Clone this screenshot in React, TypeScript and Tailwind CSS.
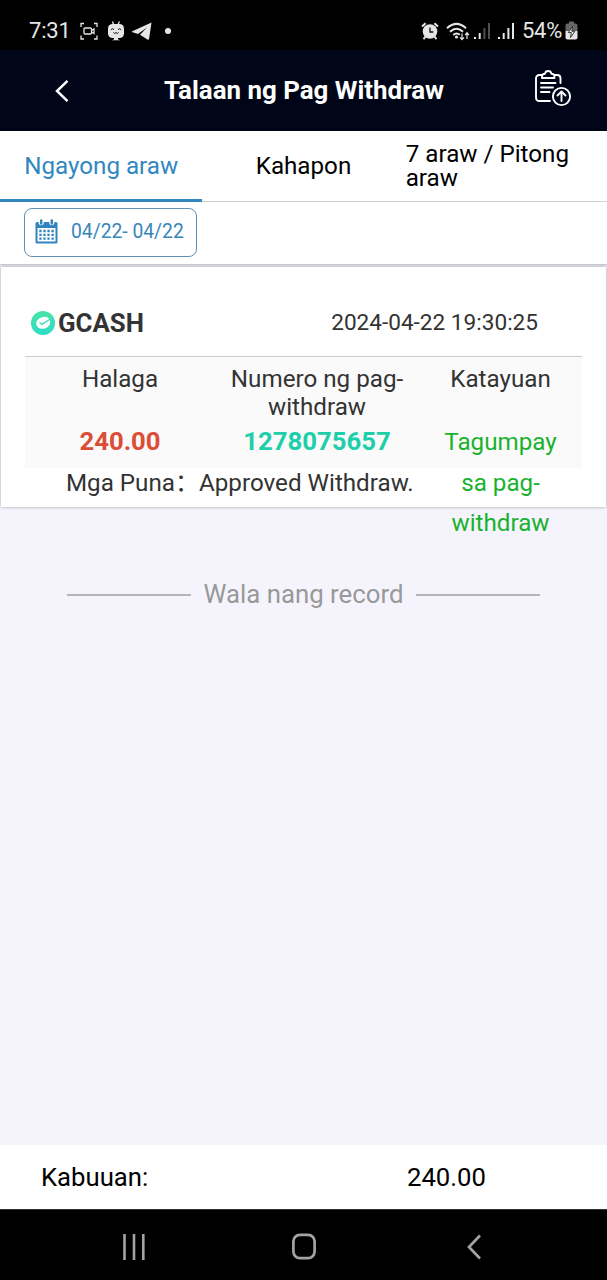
import { clsx } from "clsx";

const tabs = ["Ngayong araw", "Kahapon", "7 araw / Pitong araw"];

const record = {
  method: "GCASH",
  date: "2024-04-22 19:30:25",
  amount: "240.00",
  number: "1278075657",
  status: "Tagumpay sa pag-withdraw",
  remarks: "Approved Withdraw.",
};

function StatusBar() {
  return (
    <div className="flex h-[50px] items-center justify-between bg-black pt-[11px] pr-[29px] pl-[29px] text-[#e6e6e6]">
      <div className="flex items-center">
        <span className="w-[50px] text-[22px] leading-none tracking-[-0.2px]">7:31</span>
        <svg className="h-[20px] w-[20px]" viewBox="0 0 20 20" fill="none" stroke="currentColor" strokeWidth="1.3">
          <path d="M2 6V2.5h3M15 2.5h3V6M18 14.5V18h-3M5 18H2v-3.5" />
          <rect x="5" y="7" width="7.5" height="6" rx="1" />
          <path d="m12.5 9.5 2.5-1.5v4.500L12.5 11" />
        </svg>
        <svg className="ml-[8px] h-[20px] w-[18px]" viewBox="0 0 18 20">
          <path d="M6.5 3.5 5.5.5M11 3.5 12.5.5" stroke="currentColor" strokeWidth="1.3" />
          <rect x="1" y="3" width="16" height="14" rx="4.5" fill="currentColor" />
          <path d="M4.5 19.3q4.5-2.300 9 0zM7 16h4v2.500H7z" fill="currentColor" />
          <path d="M3.800 8.700Q5.500 7 7 8.500M14.200 8.700Q12.500 7 11 8.500M6.500 11.500l1.300 1 1.200-1 1.200 1 1.300-1" stroke="#111" fill="none" strokeWidth="1" />
        </svg>
        <svg className="ml-[7px] h-[20px] w-[20px]" viewBox="0 0 20 20">
          <path d="M19.500 1.500.3 10.300q-.8.600.3 1L6 13l9-6.500-7 7.200 7.400 4.900q1.300.5 1.700-.9z" fill="currentColor" />
        </svg>
        <span className="ml-[13px] h-[6px] w-[6px] rounded-full bg-current" />
      </div>

      <div className="flex items-center">
        <svg className="h-[18px] w-[18px]" viewBox="0 0 18 18" fill="none" stroke="currentColor">
          <circle cx="9" cy="9.500" r="7.300" fill="currentColor" stroke="none" />
          <path d="M1 4.600 4.600 1.200M17 4.600l-3.600-3.400M4.500 14.500 2.500 17.200M13.500 14.500l2 2.700" strokeWidth="2" />
          <path d="M9 5.500v4.500h3.300" stroke="#111" strokeWidth="1.300" />
        </svg>
        <svg className="ml-[7px] h-[20px] w-[24px]" viewBox="0 0 24 20" fill="none" stroke="currentColor" strokeWidth="2">
          <path d="M1 7.200q9.500-8.600 19 0M4 10.800q6.500-6 13 0M7.200 14q3.300-3 6.600-.2" />
          <circle cx="10.500" cy="16" r="1.600" fill="currentColor" stroke="none" />
          <path d="M16 12.500v6M14 16.300l2 2.200 2-2.200M21 18v-6M19.200 14l1.800-2.200 1.800 2.200" strokeWidth="1.200" />
        </svg>
        <svg className="ml-[4px] h-[18px] w-[17px]" viewBox="0 0 17 18" fill="currentColor">
          <path d="M0 15h2v2H0zM4.700 11h2v6h-2z" />
          <path d="M9.400 6h2v11h-2zM14 1h2v16h-2z" opacity=".35" />
        </svg>
        <svg className="ml-[7px] h-[18px] w-[17px]" viewBox="0 0 17 18" fill="currentColor">
          <path d="M0 15h2v2H0zM4.700 11h2v6h-2zM9.400 6h2v11h-2zM14 1h2v16h-2z" />
        </svg>
        <span className="ml-[7px] w-[43px] text-[22px] leading-none tracking-[-0.3px]">54%</span>
        <svg className="h-[19px] w-[13px]" viewBox="0 0 13 19">
          <path d="M4 .5h5v2h1.500Q12.500 2.500 12.500 4.500V10H.5V4.500q0-2 2-2H4z" fill="#666" />
          <path d="M.5 10h12v6.500q0 2-2 2h-8q-2 0-2-2z" fill="currentColor" />
          <path d="M7.500 5.500 3.300 11.500h3L5.500 16.500l4.300-6.200h-3z" fill="#fff" stroke="#222" strokeWidth=".9" />
        </svg>
      </div>
    </div>
  );
}

function Header() {
  return (
    <header className="flex h-[81px] items-center justify-between bg-[#000517] pr-[35px] pl-[54px] text-white">
      <svg className="h-[24px] w-[15px]" viewBox="0 0 15 24" fill="none" stroke="currentColor" strokeWidth="2.500">
        <path d="M13.500 1.800 3 12 13.500 22.200" />
      </svg>
      <h1 className="pl-[5px] text-[25.9px] font-bold whitespace-nowrap">Talaan ng Pag Withdraw</h1>
      <svg className="mb-[5px] h-[38px] w-[38px]" viewBox="0 0 38 38" fill="none" stroke="currentColor" strokeWidth="1.900" strokeLinecap="round" strokeLinejoin="round">
        <path d="M8 6H5.500Q2 6 2 9.500v19Q2 32 5.500 32h10.500M20.500 6H23q3.500 0 3.500 3.500V14" />
        <path d="M8 9V7q0-2 3-2.300Q11.500 2 14.200 2t3.200 2.700q3 .3 3 2.300v2z" />
        <path d="M7 14h14.500M7 18.500h12M7 23h8.500" />
        <circle cx="27.500" cy="27.500" r="8.600" />
        <path d="M27.500 32v-9M23.500 26.500l4-4 4 4" />
      </svg>
    </header>
  );
}

function CalendarIcon() {
  return (
    <svg className="mb-[2px] h-[25px] w-[23px] shrink-0" viewBox="0 0 23 25">
      <path d="M2 3h19q1.500 0 1.500 1.500V23q0 1.500-1.500 1.500H2Q.5 24.500.5 23V4.500Q.5 3 2 3z" fill="#3184bd" />
      <path d="M2.500 9h18v13.500h-18z" fill="#fff" />
      <path d="M3.700 2.500h5v2.500q-2.500 2.500-5 0zM14.300 2.500h5v2.500q-2.500 2.500-5 0z" fill="#fff" />
      <path d="M6.200 1.500v3M16.800 1.500v3" stroke="#3184bd" strokeWidth="2.500" strokeLinecap="round" />
      <path d="M4.300 12h14.500M4.300 15.800h14.500M4.300 19.600h14.500" stroke="#3184bd" strokeWidth="2.300" strokeDasharray="2.300 1.750" />
    </svg>
  );
}

function RecordCard() {
  return (
    <section className="mx-px h-[240px] bg-white px-[24px] text-[#333] shadow-[0_0_3px_rgba(0,0,0,0.35)]">
      <div className="flex h-[90px] items-center justify-between border-b border-[#ccc] pt-[23px] pr-[44px] pl-[6px]">
        <div className="flex items-center gap-[3px]">
          <svg className="h-[24px] w-[24px]" viewBox="0 0 24 24">
            <defs>
              <linearGradient id="coin" x1="0" y1="0" x2="0" y2="1">
                <stop offset="0" stopColor="#4be3a4" />
                <stop offset="1" stopColor="#2bdcc8" />
              </linearGradient>
            </defs>
            <circle cx="12" cy="12" r="12" fill="url(#coin)" />
            <path d="M17 6.500Q13 4.500 8.500 7.200 4.500 10 5.300 13.500 6.500 18 12 17.700q6-.5 7-5.400.4-2-.5-3.800z" fill="#fff" />
            <path d="m8.500 11.500 2.500 1.800L18.500 8.500" stroke="#38dcb6" strokeWidth="1.400" fill="none" />
          </svg>
          <span className="text-[25.8px] font-bold">{record.method}</span>
        </div>
        <span className="text-[22.6px]">{record.date}</span>
      </div>

      <div className="grid h-[111px] grid-cols-[190px_204px_163px] bg-[#fafafa] pt-[8px] text-center text-[24.2px] leading-[28px]">
        <div>Halaga</div>
        <div>Numero ng pag-withdraw</div>
        <div>Katayuan</div>
        <div className="-mt-[7px] text-[25.7px] leading-[40px] font-bold text-[#dc4d35]">{record.amount}</div>
        <div className="-mt-[7px] text-[25.7px] leading-[40px] font-bold text-[#1dcfa9]">{record.number}</div>
        <div className="-mt-[6px] h-0 px-[20px] leading-[40.5px] text-[#18b22f]">{record.status}</div>
      </div>

      <div className="flex pl-[41px] text-[24.2px] leading-[30px] whitespace-nowrap">
        <span className="w-[133px]">Mga Puna：</span>
        <span>{record.remarks}</span>
      </div>
    </section>
  );
}

export default function App() {
  return (
    <div className="flex h-[1280px] w-[607px] flex-col overflow-hidden bg-[#f5f4fc] font-['Roboto','Noto_Sans_CJK_SC',sans-serif]">
      <StatusBar />
      <Header />

      <nav className="grid h-[71px] grid-cols-3 border-b border-[#d5d5d5] bg-white text-[24.2px] leading-[24px]">
        {tabs.map((tab, i) => (
          <div
            key={tab}
            className={clsx(
              "flex items-center justify-center",
              i === 0 && "-mb-px border-b-3 border-[#3187c0] pt-[2px] text-[#3187c0]",
              i === 2 && "pr-[29px] pl-px"
            )}
          >
            {tab}
          </div>
        ))}
      </nav>

      <div className="mb-[3px] h-[62px] bg-white px-[24px] pt-[6px] shadow-[0_1px_2px_rgba(0,0,0,0.25)]">
        <button className="flex h-[49px] w-[173px] items-center rounded-lg border border-[#5a93b8] pl-[10px] text-[19.3px] text-[#3985ba]">
          <CalendarIcon />
          <span className="ml-[13px] whitespace-nowrap">04/22- 04/22</span>
        </button>
      </div>

      <RecordCard />

      <div className="mx-[67px] mt-[72px] flex items-center justify-between text-[25.8px] leading-[32px] text-[#999]">
        <span className="mt-[1px] h-[2px] w-[124px] bg-[#b5b5b8]" />
        <span className="-mt-px">Wala nang record</span>
        <span className="mt-[1px] h-[2px] w-[124px] bg-[#b5b5b8]" />
      </div>

      <footer className="mt-auto flex h-[64px] shrink-0 items-center bg-white pl-[41px] text-[25.7px] text-black">
        <span className="w-[366px]">Kabuuan:</span>
        <span>240.00</span>
      </footer>

      <div className="flex h-[71px] shrink-0 items-center justify-between border-t border-[#333] bg-black pt-[3px] pr-[126px] pl-[123px]">
        <svg className="h-[26px] w-[22px]" viewBox="0 0 22 26" stroke="#a3a3a3" strokeWidth="2.600">
          <path d="M1.500 0v26M11 0v26M20.300 0v26" />
        </svg>
        <svg className="mr-[4px] h-[27px] w-[24px]" viewBox="0 0 24 27" fill="none" stroke="#a3a3a3" strokeWidth="2.700">
          <rect x="1.400" y="1.900" width="21.200" height="23.200" rx="6.500" />
        </svg>
        <svg className="h-[26px] w-[14px]" viewBox="0 0 14 26" fill="none" stroke="#a3a3a3" strokeWidth="2.700">
          <path d="M13 1.500 2 13 13 24.500" />
        </svg>
      </div>
    </div>
  );
}
